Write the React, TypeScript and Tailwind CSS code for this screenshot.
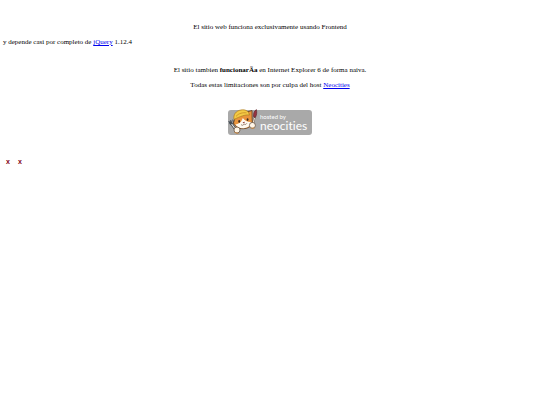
import React from 'react';

const HostedBadge: React.FC = () => (
  <svg viewBox="0 0 84 28" className="block h-7 w-[84px]" role="img" aria-label="hosted by neocities">
    <rect x="0" y="2" width="84" height="25" rx="3" fill="#a9a9a9" />
    {/* fork */}
    <path d="M2.5 14.5 L8 22" stroke="#4a4a4a" strokeWidth="2.6" strokeLinecap="round" />
    <path d="M0.8 13 L2.4 16.6 L5.6 15.4 L4.8 11.6 M2.6 12 L4 16" fill="none" stroke="#46505a" strokeWidth="1" />
    <path d="M3.6 16 L8 22" stroke="#e4ebee" strokeWidth="1.1" />
    {/* brush */}
    <path d="M26.5 10 L24 19" stroke="#7a6c60" strokeWidth="2" strokeLinecap="round" />
    <path d="M26.5 10 L24 19" stroke="#f1e6d4" strokeWidth="1" />
    <path d="M28.4 1.6 C26 3 25.2 6 25.6 8.8 L27.4 9.4 C28.8 7 29 4.4 28.4 1.6 Z" fill="#963440" stroke="#5a2028" strokeWidth="0.6" />
    {/* head */}
    <path d="M7 10 L5.5 15 C7 19 12 21.5 17 20.5 C22 20 25 16 24.2 12 L24 2.5 L19 4 L11 6 Z" fill="#e9943c" stroke="#5a3a20" strokeWidth="0.8" />
    <path d="M7.4 16.4 C10 16 13 15.4 14.8 10 C17 13 20 14.4 23.6 14 C23 17.4 20.5 19.6 17 20 C12.4 20.8 9 19 7.4 16.4 Z" fill="#fffaf0" />
    <path d="M6 11.5 C5 6.5 8 2.8 13 2 C17 1.2 20.5 2.8 21.5 7 C17 6.5 12 8.5 6 11.5 Z" fill="#f4ca45" stroke="#a9781f" strokeWidth="0.7" />
    <path d="M8 8.4 C11 5 15 4.4 18.6 4.9" fill="none" stroke="#c58b26" strokeWidth="0.8" />
    <ellipse cx="11.2" cy="13.4" rx="0.9" ry="1.3" fill="#3b2a20" />
    <ellipse cx="19.6" cy="11.6" rx="0.9" ry="1.3" fill="#3b2a20" />
    <path d="M14.5 14.2 L17 13.7 L16 15.4 Z" fill="#8e3b34" />
    <path d="M13 16.7 Q15 18.2 16 16.2 Q18 17.2 19 15.2" fill="none" stroke="#6b4a34" strokeWidth="0.6" />
    {/* paws */}
    <circle cx="9" cy="22" r="3" fill="#fff6e8" stroke="#5a4330" strokeWidth="0.7" />
    <circle cx="24.4" cy="17.4" r="3" fill="#fff6e8" stroke="#5a4330" strokeWidth="0.7" />
    <path d="M6.6 24.4 L10.5 25.6 M23 20.2 L26.4 20" stroke="#d08a3c" strokeWidth="0.9" />
    <text x="32" y="11" fontFamily="Lato, sans-serif" fontSize="6" fill="#fff">hosted by</text>
    <text x="32" y="22" fontFamily="Lato, sans-serif" fontSize="12" fill="#fff" className="[font-variant-ligatures:none]">neocities</text>
  </svg>
);

const App: React.FC = () => {
  return (
    <main className="bg-white px-[3px] pt-[23px] font-['Liberation_Serif',serif] text-[7px] leading-[8px] text-black">
      <p className="text-center">El sitio web funciona exclusivamente usando Frontend</p>
      <p className="mt-[7px]">
        y depende casi por completo de{' '}
        <a href="https://jquery.com" className="text-[#0000ee] underline">jQuery</a> 1.12.4
      </p>

      <div className="mt-5 flex flex-col items-center gap-[7px] text-center">
        <p>
          El sitio tambien <b>funcionarÃa</b> en Internet Explorer 6 de forma naiva.
        </p>
        <p>
          Todas estas limitaciones son por culpa del host{' '}
          <a href="https://neocities.org" className="text-[#0000ee] underline">Neocities</a>
        </p>
      </div>

      <div className="mt-[19px] flex justify-center">
        <a href="https://neocities.org">
          <HostedBadge />
        </a>
      </div>

      <div className="mt-[22px] flex gap-2 px-[3px] font-['Liberation_Sans',sans-serif] font-bold text-[#800010]">
        <button type="button" className="w-1">x</button>
        <button type="button" className="w-1">x</button>
      </div>
    </main>
  );
};

export default App;
